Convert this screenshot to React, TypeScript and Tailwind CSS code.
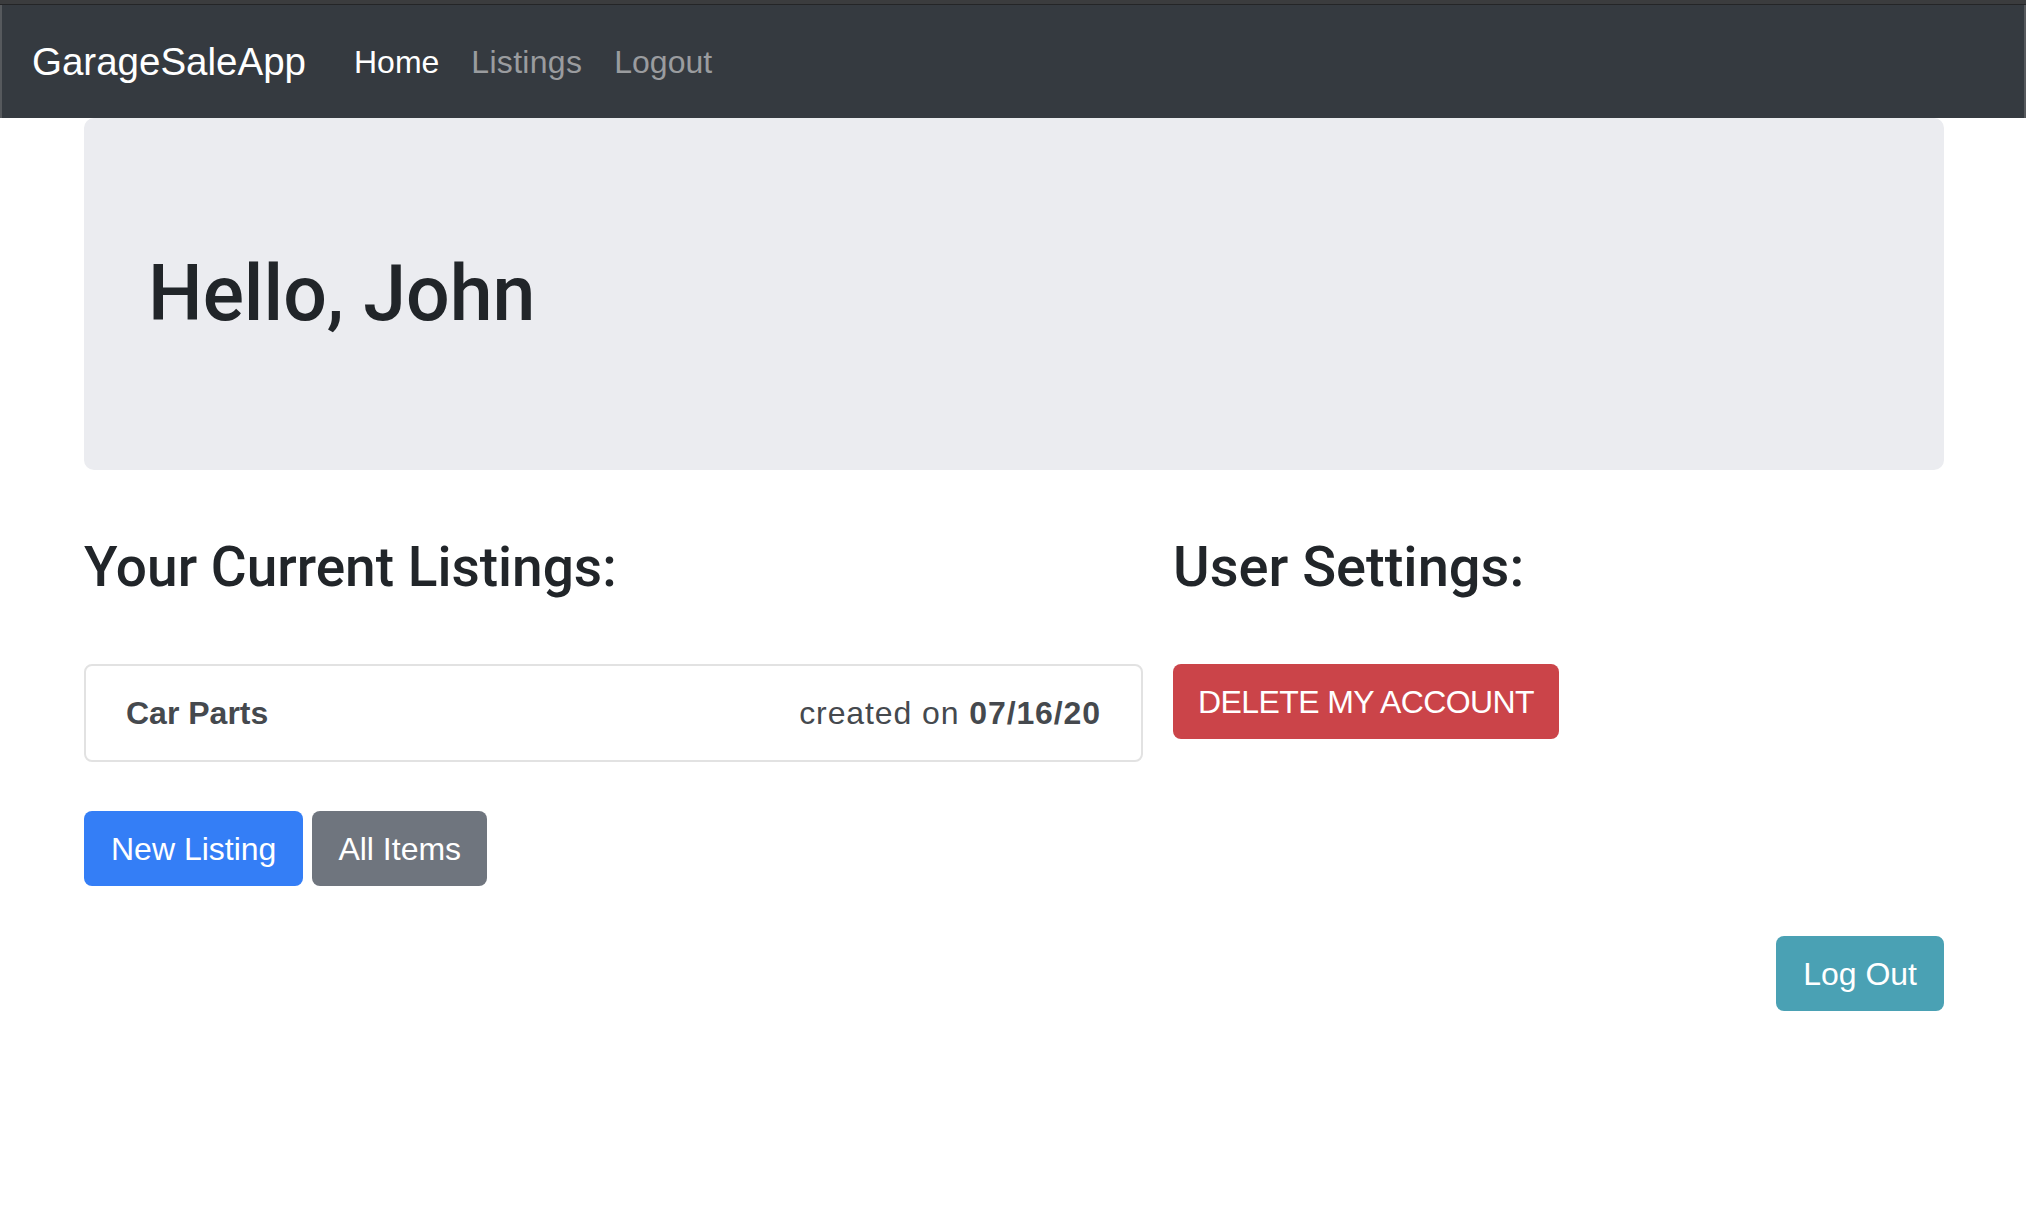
export default function App() {
  return (
    <div className="min-h-screen bg-white font-['Liberation_Sans',Arial,sans-serif] text-[32px] leading-[48px] text-[#212529]">
      <div className="h-[4px] bg-[#3b3c3e]" />
      <div className="h-[1px] bg-[#242527]" />
      <nav className="h-[113px] bg-[#353a40] border-x-2 border-[#56595d] flex items-center pl-[30px]">
        <a href="#" className="text-[38.5px] leading-[60px] text-white mr-[32px]">
          GarageSaleApp
        </a>
        <ul className="flex">
          <li>
            <a href="#" className="block px-[16px] text-white">
              Home
            </a>
          </li>
          <li>
            <a href="#" className="block px-[16px] text-[#9a9c9f] tracking-[0.3px]">
              Listings
            </a>
          </li>
          <li>
            <a href="#" className="block px-[16px] text-[#9a9c9f]">
              Logout
            </a>
          </li>
        </ul>
      </nav>

      <main className="w-[1860px] ml-[84px]">
        <div className="bg-[#ebecf0] rounded-[10px] px-[64px] py-[128px] mb-[64px]">
          <h1 className="font-['Roboto',Arial,sans-serif] font-medium text-[77px] leading-[96px]">
            Hello, John
          </h1>
        </div>

        <div className="flex gap-[30px]">
          <div className="w-[1059px]">
            <h3 className="font-['Roboto',Arial,sans-serif] font-medium text-[55px] leading-[67px]">
              Your Current Listings:
            </h3>
            <div className="mt-[63px] border-2 border-[#e2e2e2] rounded-[8px] px-[40px] py-[23px] flex justify-between text-[#45494e]">
              <span className="font-bold">Car Parts</span>
              <span className="tracking-[0.9px]">
                created on <span className="font-bold">07/16/20</span>
              </span>
            </div>
            <div className="mt-[49px] flex gap-[9px]">
              <button className="px-[27px] py-[13.5px] rounded-[8px] bg-[#347ef6] text-white">
                New Listing
              </button>
              <button className="px-[26px] py-[13.5px] rounded-[8px] bg-[#6f757e] text-white">
                All Items
              </button>
            </div>
          </div>

          <div>
            <h3 className="font-['Roboto',Arial,sans-serif] font-medium text-[56px] leading-[67px]">
              User Settings:
            </h3>
            <button className="mt-[63px] px-[25px] py-[13.5px] rounded-[8px] bg-[#cb4449] text-white tracking-[-0.6px]">
              DELETE MY ACCOUNT
            </button>
          </div>
        </div>

        <div className="flex justify-end mt-[50px]">
          <button className="px-[27px] py-[13.5px] rounded-[8px] bg-[#4aa1b4] text-white">
            Log Out
          </button>
        </div>
      </main>
    </div>
  )
}
